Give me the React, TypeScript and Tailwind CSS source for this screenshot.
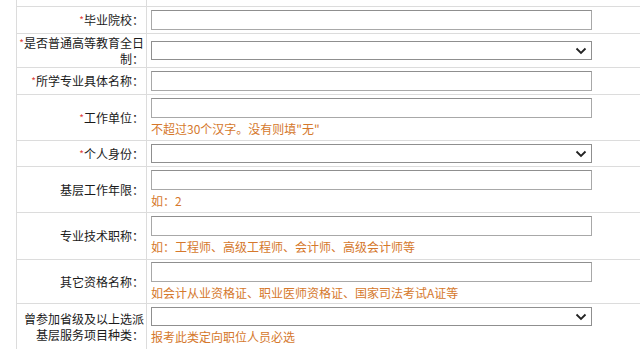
import React from "react";

const font = { fontFamily: '"SimSun", "Noto Sans CJK SC", sans-serif' };

function Star() {
  return <span className="text-[#e0403a] text-[10px] align-top">*</span>;
}

function TextBox() {
  return <div className="w-[441px] h-[20px] border border-[#a8a8a8] border-t-[#8f8f8f] bg-white" />;
}

function SelectBox() {
  return (
    <div className="w-[441px] h-[19px] border border-[#8f8f8f] bg-white flex items-center justify-end pr-[4px]">
      <svg width="12" height="8" viewBox="0 0 12 8">
        <path d="M1.5 1.5 L6 6 L10.5 1.5" fill="none" stroke="#222" strokeWidth="1.8" />
      </svg>
    </div>
  );
}

function Hint({ children }: { children: React.ReactNode }) {
  return <div className="text-[12px] leading-[18px] text-[#d5782c] mt-[2px]">{children}</div>;
}

type Row = {
  label: React.ReactNode;
  star?: boolean;
  kind: "text" | "select";
  hint?: string;
  h: string;
};

const rows: Row[] = [
  { label: "毕业院校：", star: true, kind: "text", h: "h-[27px]" },
  {
    label: (
      <>
        是否普通高等教育全日
        <br />
        制：
      </>
    ),
    star: true,
    kind: "select",
    h: "h-[34px]",
  },
  { label: "所学专业具体名称：", star: true, kind: "text", h: "h-[27px]" },
  { label: "工作单位：", star: true, kind: "text", hint: "不超过30个汉字。没有则填\"无\"", h: "h-[46px]" },
  { label: "个人身份：", star: true, kind: "select", h: "h-[26px]" },
  { label: "基层工作年限：", kind: "text", hint: "如：2", h: "h-[46px]" },
  { label: "专业技术职称：", kind: "text", hint: "如：工程师、高级工程师、会计师、高级会计师等", h: "h-[47px]" },
  { label: "其它资格名称：", kind: "text", hint: "如会计从业资格证、职业医师资格证、国家司法考试A证等", h: "h-[44px]" },
  {
    label: (
      <>
        曾参加省级及以上选派
        <br />
        基层服务项目种类：
      </>
    ),
    kind: "select",
    hint: "报考此类定向职位人员必选",
    h: "h-[46px]",
  },
];

export default function App() {
  return (
    <div className="w-[640px] h-[349px] overflow-hidden bg-white" style={font}>
      <div className="ml-[16px] border-l border-[#dcdcdc] text-[12px] text-[#1a1a1a]">
        <div className="h-[7px] flex border-b border-[#dcdcdc]">
          <div className="w-[130px] border-r border-[#dcdcdc]" />
        </div>
        {rows.map((r, i) => (
          <div key={i} className={`flex border-b border-[#dcdcdc] ${r.h}`}>
            <div className="w-[130px] shrink-0 border-r border-[#dcdcdc] flex items-center justify-end pr-[2px] text-right leading-[16px] whitespace-nowrap">
              <div>
                {r.star && <Star />}
                {r.label}
              </div>
            </div>
            <div className="flex flex-col justify-center pl-[4px]">
              {r.kind === "text" ? <TextBox /> : <SelectBox />}
              {r.hint && <Hint>{r.hint}</Hint>}
            </div>
          </div>
        ))}
      </div>
    </div>
  );
}
